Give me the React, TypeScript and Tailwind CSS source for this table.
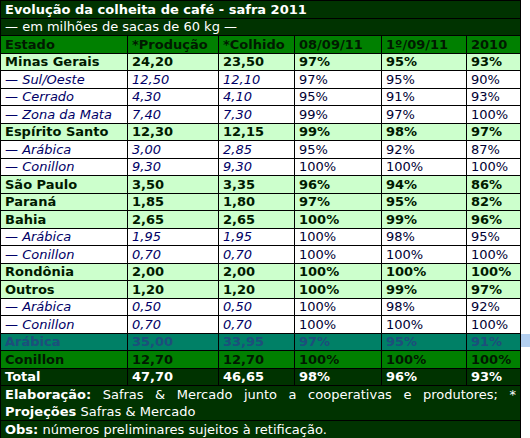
import React from 'react';

type Row = {
  name: string;
  prod: string;
  colh: string;
  a: string;
  b: string;
  c: string;
  kind: 'state' | 'sub' | 'arabica' | 'conillon' | 'total';
};

const rows: Row[] = [
  { name: 'Minas Gerais', prod: '24,20', colh: '23,50', a: '97%', b: '95%', c: '93%', kind: 'state' },
  { name: '— Sul/Oeste', prod: '12,50', colh: '12,10', a: '97%', b: '95%', c: '90%', kind: 'sub' },
  { name: '— Cerrado', prod: '4,30', colh: '4,10', a: '95%', b: '91%', c: '93%', kind: 'sub' },
  { name: '— Zona da Mata', prod: '7,40', colh: '7,30', a: '99%', b: '97%', c: '100%', kind: 'sub' },
  { name: 'Espírito Santo', prod: '12,30', colh: '12,15', a: '99%', b: '98%', c: '97%', kind: 'state' },
  { name: '— Arábica', prod: '3,00', colh: '2,85', a: '95%', b: '92%', c: '87%', kind: 'sub' },
  { name: '— Conillon', prod: '9,30', colh: '9,30', a: '100%', b: '100%', c: '100%', kind: 'sub' },
  { name: 'São Paulo', prod: '3,50', colh: '3,35', a: '96%', b: '94%', c: '86%', kind: 'state' },
  { name: 'Paraná', prod: '1,85', colh: '1,80', a: '97%', b: '95%', c: '82%', kind: 'state' },
  { name: 'Bahia', prod: '2,65', colh: '2,65', a: '100%', b: '99%', c: '96%', kind: 'state' },
  { name: '— Arábica', prod: '1,95', colh: '1,95', a: '100%', b: '98%', c: '95%', kind: 'sub' },
  { name: '— Conillon', prod: '0,70', colh: '0,70', a: '100%', b: '100%', c: '100%', kind: 'sub' },
  { name: 'Rondônia', prod: '2,00', colh: '2,00', a: '100%', b: '100%', c: '100%', kind: 'state' },
  { name: 'Outros', prod: '1,20', colh: '1,20', a: '100%', b: '99%', c: '97%', kind: 'state' },
  { name: '— Arábica', prod: '0,50', colh: '0,50', a: '100%', b: '98%', c: '92%', kind: 'sub' },
  { name: '— Conillon', prod: '0,70', colh: '0,70', a: '100%', b: '100%', c: '100%', kind: 'sub' },
  { name: 'Arábica', prod: '35,00', colh: '33,95', a: '97%', b: '95%', c: '91%', kind: 'arabica' },
  { name: 'Conillon', prod: '12,70', colh: '12,70', a: '100%', b: '100%', c: '100%', kind: 'conillon' },
  { name: 'Total', prod: '47,70', colh: '46,65', a: '98%', b: '96%', c: '93%', kind: 'total' },
];

const rowStyle: Record<Row['kind'], string> = {
  state: 'bg-[#ccffcc] text-[#001a00] font-bold',
  sub: 'bg-white text-[#000066]',
  arabica: 'bg-[#008066] text-[#1d4e7c] font-bold',
  conillon: 'bg-[#008000] text-[#001a00] font-bold',
  total: 'bg-[#003300] text-white font-bold',
};

const td = 'border border-black pl-[4px] whitespace-nowrap overflow-hidden';

export default function App() {
  return (
    <div className="flex bg-white w-[530px] h-[438px] text-[13px] leading-[15px] font-['DejaVu_Sans',Verdana,sans-serif]">
      <table className="w-[520px] table-fixed border-collapse">
        <colgroup>
          <col className="w-[127px]" />
          <col className="w-[91px]" />
          <col className="w-[76px]" />
          <col className="w-[87px]" />
          <col className="w-[85px]" />
          <col className="w-[54px]" />
        </colgroup>
        <tbody>
          <tr className="h-[17.5px] bg-[#003300] text-white font-bold">
            <td colSpan={6} className={td}>Evolução da colheita de café - safra 2011</td>
          </tr>
          <tr className="h-[17.5px] bg-[#003300] text-white">
            <td colSpan={6} className={td}>— em milhões de sacas de 60 kg —</td>
          </tr>
          <tr className="h-[17.5px] bg-[#008000] text-[#001a00] font-bold">
            <td className={td}>Estado</td>
            <td className={td}>*Produção</td>
            <td className={td}>*Colhido</td>
            <td className={td}>08/09/11</td>
            <td className={td}>1º/09/11</td>
            <td className={td}>2010</td>
          </tr>
          {rows.map((r, i) => (
            <tr key={i} className={`h-[17.5px] ${rowStyle[r.kind]}`}>
              <td className={`${td} ${r.kind === 'sub' ? 'italic' : ''}`}>{r.name}</td>
              <td className={`${td} ${r.kind === 'sub' ? 'italic' : ''}`}>{r.prod}</td>
              <td className={`${td} ${r.kind === 'sub' ? 'italic' : ''}`}>{r.colh}</td>
              <td className={`${td} ${r.kind === 'sub' ? 'text-[#000033]' : ''}`}>{r.a}</td>
              <td className={`${td} ${r.kind === 'sub' ? 'text-[#000033]' : ''}`}>{r.b}</td>
              <td className={`${td} ${r.kind === 'sub' ? 'text-[#000033]' : ''}`}>{r.c}</td>
            </tr>
          ))}
          <tr className="h-[33px] bg-[#003300] text-white">
            <td colSpan={6} className="border border-black px-[4px] text-justify leading-[17px]">
              <b>Elaboração:</b> Safras &amp; Mercado junto a cooperativas e produtores; * <b>Projeções</b> Safras &amp; Mercado
            </td>
          </tr>
          <tr className="h-[18px] bg-[#003300] text-white">
            <td colSpan={6} className={td}>
              <b>Obs:</b> números preliminares sujeitos à retificação.
            </td>
          </tr>
        </tbody>
      </table>
      <div className="w-[10px] flex flex-col">
        <div className="mt-[334px] h-[13px] bg-[#b4d0f0]" />
      </div>
    </div>
  );
}
